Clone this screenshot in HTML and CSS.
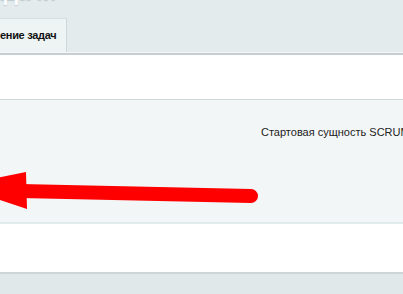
FILE: index.html
```html
<!DOCTYPE html>
<html lang="ru">
<head>
<meta charset="utf-8">
<title>Задачи</title>
<link rel="stylesheet" href="styles.css">
</head>
<body>
<div class="page">
  <header class="header">
    <div class="title-row">
      <span class="title">Задачи</span>
      <span class="star">&#9733;</span>
    </div>
    <nav class="tabs">
      <div class="tab">ение задач</div>
    </nav>
  </header>
  <div class="sep"></div>
  <div class="blank"></div>
  <div class="panel">
    <div class="panel-spacer"></div>
    <div class="panel-text">Стартовая сущность SCRUM</div>
  </div>
  <div class="blank blank-low"></div>
  <div class="footer"></div>
  <svg class="arrow" width="403" height="294" viewBox="0 0 403 294" aria-hidden="true">
    <line x1="20" y1="191" x2="251" y2="196" stroke="#ff0000" stroke-width="14" stroke-linecap="round"/>
    <polygon points="26,172 27,209 -42,186" fill="#ff0000"/>
  </svg>
</div>
</body>
</html>
```

FILE: styles.css
```css
html, body {
  margin: 0;
  padding: 0;
}
body {
  width: 403px;
  height: 294px;
  overflow: hidden;
  background: #e2e9eb;
  font-family: "Liberation Sans", Arial, sans-serif;
}
.page {
  position: relative;
  width: 403px;
  height: 294px;
  overflow: hidden;
  display: flex;
  flex-direction: column;
}
.header {
  background: #e4ebed;
  height: 52px;
  display: flex;
  flex-direction: column;
}
.title-row {
  display: flex;
  align-items: baseline;
  gap: 12px;
  margin-top: -18px;
  height: 22px;
}
.title {
  font-size: 22px;
  line-height: 22px;
  font-weight: bold;
  color: #ffffff;
  text-shadow: 0 1px 1px rgba(120, 140, 150, 0.35);
  margin-left: -22px;
}
.star {
  font-size: 14px;
  color: #aab4b8;
}
.tabs {
  display: flex;
  margin-top: 14px;
  flex: 1;
}
.tab {
  width: 67px;
  box-sizing: border-box;
  background: #eef3f4;
  border-top: 1px solid #d6dee0;
  border-right: 1px solid #cfd8da;
  font-size: 11px;
  font-weight: bold;
  letter-spacing: -0.3px;
  color: #111;
  padding-top: 10px;
  white-space: nowrap;
  overflow: hidden;
}
.sep {
  height: 3px;
  border-top: 1px solid #f4f7f8;
  background: #c6ced0;
  box-sizing: border-box;
}
.blank {
  background: #ffffff;
  height: 44px;
}
.panel {
  background: #f3f6f7;
  border-top: 1px solid #cfd6d8;
  border-bottom: 2px solid #e2ebeb;
  height: 122px;
  display: grid;
  grid-template-columns: 261px 1fr;
}
.panel-text {
  padding-top: 26px;
  font-size: 11px;
  line-height: 13px;
  color: #222;
  white-space: nowrap;
  overflow: hidden;
}
.blank-low {
  height: 48px;
}
.footer {
  flex: 1;
  background: #e1e8ea;
  border-top: 2px solid #cdd5d7;
}
.arrow {
  position: absolute;
  left: 0;
  top: 0;
}
```
